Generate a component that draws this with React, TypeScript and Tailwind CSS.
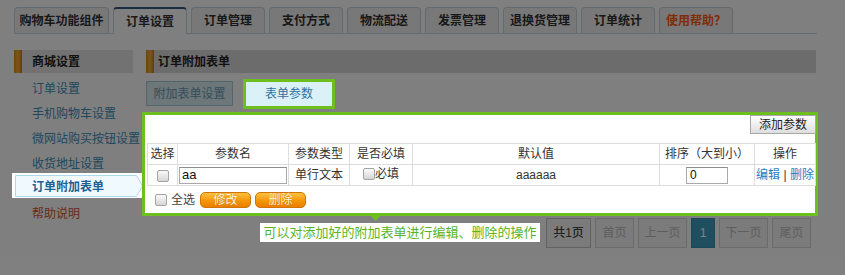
import { useState } from 'react'

const TABS = ['购物车功能组件', '订单设置', '订单管理', '支付方式', '物流配送', '发票管理', '退换货管理', '订单统计', '使用帮助？']

const MENU = ['订单设置', '手机购物车设置', '微网站购买按钮设置', '收货地址设置', '订单附加表单', '帮助说明']

function CheckBox() {
  return (
    <span className="inline-block size-[12px] rounded-[2px] border border-[#a3a3a3] bg-gradient-to-b from-[#fafafa] to-[#d6d6d6]" />
  )
}

function OrangeButton({ label }: { label: string }) {
  return (
    <button
      type="button"
      className="flex h-[16px] w-[51px] items-center justify-center rounded-[5px] border border-[#d27400] bg-gradient-to-b from-[#ffc23a] via-[#f59a0c] to-[#e97e00] text-[12px] leading-none text-[#fff6df] [text-shadow:0_0_1px_#b86000]"
    >
      {label}
    </button>
  )
}

function PageButton({ label, w, active, strong }: { label: string; w: string; active?: boolean; strong?: boolean }) {
  return (
    <span
      className={[
        'flex h-[30px] items-center justify-center border text-[12px]',
        w,
        active
          ? 'border-[#3a90ac] bg-[#3e9ebd] text-white'
          : strong
            ? 'border-[#c4c4c4] bg-[#f6f6f6] font-medium text-[#444]'
            : 'border-[#d6d6d6] bg-[#f6f6f6] text-[#bcbcbc]',
      ].join(' ')}
    >
      {label}
    </span>
  )
}

export default function App() {
  const [activeTab] = useState(1)

  return (
    <div className="relative h-[275px] w-[845px] overflow-hidden bg-white font-[Liberation_Sans,Noto_Sans_CJK_SC,sans-serif] text-[12px] text-[#333]">
      {/* tabs */}
      <div className="ml-[14px] mt-[7px] flex w-[803px] gap-[4px] border-b border-[#c4d6de]">
        {TABS.map((t, i) => (
          <div
            key={t}
            className={[
              'flex h-[26px] items-center justify-center rounded-t-[4px] border border-b-0 pt-[1px] text-[12px] font-bold',
              i === 0 ? 'w-[95px]' : 'w-[74px]',
              i === activeTab
                ? '-mb-px h-[27px] border-t-2 border-[#c4d6de] border-t-[#35597a] bg-white text-[#333]'
                : 'border-[#c4d6de] bg-[#f0f0f0]',
              i === TABS.length - 1 ? 'text-[#ff5a10]' : i === activeTab ? '' : 'text-[#303030]',
            ].join(' ')}
          >
            {t}
          </div>
        ))}
      </div>

      <div className="mt-[16px] flex">
        {/* sidebar */}
        <aside className="ml-[14px] w-[119px]">
          <div className="flex h-[23px] items-center bg-[#e4e4e4]">
            <span className="h-full w-[8px] bg-gradient-to-r from-[#d98a1c] via-[#f6b040] to-[#c97a10]" />
            <span className="pl-[10px] text-[12px] font-bold text-[#222]">商城设置</span>
          </div>
          <div className="mt-[3px]">
            {MENU.map((m) =>
              m === '订单附加表单' ? (
                <div key={m} className="relative z-20 -ml-[2px] -mt-[3px] mb-[3px] flex h-[25px] w-[131px] items-center bg-white">
                  <svg className="absolute inset-0" width="131" height="25" viewBox="0 0 131 25" aria-hidden="true">
                    <path d="M3.5 2.5 H124.5 L130.5 13 L124.5 23.5 H3.5 Z" fill="#f0f9fd" stroke="#acd8ec" />
                  </svg>
                  <span className="relative whitespace-nowrap pl-[20px] pt-[2px] font-semibold text-[#1f5f92]">{m}</span>
                </div>
              ) : (
                <div
                  key={m}
                  className={[
                    'flex h-[25px] items-center whitespace-nowrap pl-[18px]',
                    m === '帮助说明' ? 'text-[#d0562a]' : 'text-[#3f90bc]',
                  ].join(' ')}
                >
                  {m}
                </div>
              ),
            )}
          </div>
        </aside>

        {/* main */}
        <main className="ml-[13px] w-[670px]">
          <div className="flex h-[23px] items-center bg-[#d8d8d8]">
            <span className="h-full w-[8px] bg-gradient-to-r from-[#d98a1c] via-[#f6b040] to-[#c97a10]" />
            <span className="pl-[4px] font-bold text-[#222]">订单附加表单</span>
          </div>

          <div className="mt-[8px] flex gap-[13px]">
            <button type="button" className="h-[25px] w-[87px] border border-[#a6cadb] bg-[#dbeef4] text-[#6a9bb3]">
              附加表单设置
            </button>
            <button
              type="button"
              className="relative z-20 mt-[1px] h-[24px] w-[86px] bg-[#dbf1f8] text-[#2f72a6] ring-[3px] ring-[#6cbf1f]"
            >
              表单参数
            </button>
          </div>

          {/* highlighted card */}
          <div className="relative z-20 -ml-px mt-[9px] w-[670px] bg-white pb-[5px] pl-[2px] ring-[3px] ring-[#6cbf1f]">
            <div className="flex justify-end">
              <button
                type="button"
                className="-mr-px h-[19px] w-[66px] border border-[#a8a8a8] bg-gradient-to-b from-[#ffffff] to-[#dedede] text-[12px] text-[#222]"
              >
                添加参数
              </button>
            </div>
            <table className="mt-[9px] w-[668px] table-fixed border-collapse text-center text-[12px] text-[#333]">
              <colgroup>
                <col className="w-[30px]" />
                <col className="w-[111px]" />
                <col className="w-[61px]" />
                <col className="w-[63px]" />
                <col className="w-[247px]" />
                <col className="w-[95px]" />
                <col className="w-[61px]" />
              </colgroup>
              <thead>
                <tr className="h-[21px]">
                  {['选择', '参数名', '参数类型', '是否必填', '默认值', '排序（大到小）', '操作'].map((h) => (
                    <th key={h} className="border border-[#dddddd] p-0 font-normal">
                      {h}
                    </th>
                  ))}
                </tr>
              </thead>
              <tbody>
                <tr className="h-[21px]">
                  <td className="border border-[#dddddd] p-0">
                    <span className="flex justify-center pt-[1px]">
                      <CheckBox />
                    </span>
                  </td>
                  <td className="border border-[#dddddd] p-0">
                    <div className="mx-px flex h-[17px] items-center border border-[#a9a9a9] border-t-[#8e8e8e] pl-[2px] text-left text-[13px] font-medium text-[#111]">
                      aa
                    </div>
                  </td>
                  <td className="border border-[#dddddd] p-0">单行文本</td>
                  <td className="border border-[#dddddd] p-0">
                    <span className="inline-flex items-center gap-0">
                      <CheckBox />
                      必填
                    </span>
                  </td>
                  <td className="border border-[#dddddd] p-0 text-[12px] text-[#333]">aaaaaa</td>
                  <td className="border border-[#dddddd] p-0">
                    <div className="mx-auto flex h-[17px] w-[42px] items-center border border-[#a9a9a9] border-t-[#8e8e8e] pl-[3px] text-left font-medium text-[#111]">
                      0
                    </div>
                  </td>
                  <td className="border border-[#dddddd] p-0 text-[#2a7ac2]">
                    编辑 <span className="text-[#333]">|</span> 删除
                  </td>
                </tr>
              </tbody>
            </table>
            <div className="mt-[6px] flex h-[16px] items-center pl-[8px]">
              <CheckBox />
              <span className="ml-[4px] mr-[5px] text-[#444]">全选</span>
              <div className="flex gap-[4px]">
                <OrangeButton label="修改" />
                <OrangeButton label="删除" />
              </div>
            </div>
          </div>

          {/* pagination */}
          <div className="mt-[5px] flex justify-end gap-[4px] pr-[5px]">
            <PageButton label="共1页" w="w-[45px]" strong />
            <PageButton label="首页" w="w-[39px]" />
            <PageButton label="上一页" w="w-[49px]" />
            <PageButton label="1" w="w-[24px]" active />
            <PageButton label="下一页" w="w-[49px]" />
            <PageButton label="尾页" w="w-[39px]" />
          </div>
        </main>
      </div>

      {/* guide overlay */}
      <div className="absolute inset-0 z-10 bg-black/50" />

      {/* tooltip */}
      <svg className="absolute left-[369px] top-[214px] z-20" width="13" height="8" viewBox="0 0 13 8" aria-hidden="true">
        <path d="M0 0 H13 L6.5 7 Z" fill="#6cbf1f" />
      </svg>
      <div className="absolute left-[260px] top-[223px] z-20 flex h-[19px] w-[280px] items-center justify-center bg-white text-[13px] text-[#5ab526]">
        可以对添加好的附加表单进行编辑、删除的操作
      </div>
    </div>
  )
}
